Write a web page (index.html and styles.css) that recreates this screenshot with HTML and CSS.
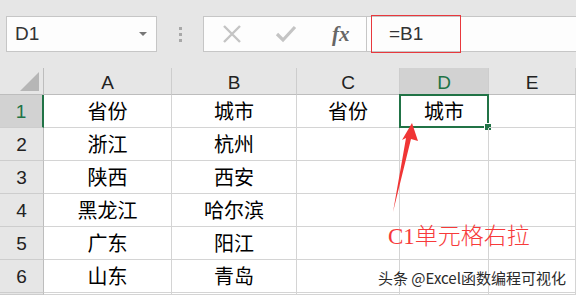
FILE: index.html
```html
<!DOCTYPE html>
<html lang="zh-CN">
<head>
    <meta charset="UTF-8">
    <title>Excel 公式右拉</title>
    <link rel="stylesheet" href="styles.css">
</head>
<body>

    <div class="toolbar">
        <div class="name-box">
            <span class="name-text">D1</span>
            <span class="drop"></span>
        </div>
        <div class="grip">
            <span></span><span></span><span></span>
        </div>
        <div class="fx-box">
            <svg class="ico" width="20" height="20" viewBox="0 0 20 20">
                <path d="M2 2 L18 18 M18 2 L2 18" stroke="#c4c4c4" stroke-width="2.4" fill="none"/>
            </svg>
            <svg class="ico" width="22" height="20" viewBox="0 0 22 20">
                <path d="M2 10 L8 16 L20 3" stroke="#c4c4c4" stroke-width="3.2" fill="none"/>
            </svg>
            <span class="fx">fx</span>
        </div>
        <div class="formula">
            <div class="formula-edit">=B1</div>
        </div>
    </div>

    <div class="sheet">
        <div class="corner"><span class="tri"></span></div>
        <div class="col-head">A</div>
        <div class="col-head">B</div>
        <div class="col-head">C</div>
        <div class="col-head active">D</div>
        <div class="col-head">E</div>

        <div class="row-head active">1</div>
        <div class="cell">省份</div>
        <div class="cell">城市</div>
        <div class="cell">省份</div>
        <div class="cell selected">城市<span class="handle"></span></div>
        <div class="cell"></div>

        <div class="row-head">2</div>
        <div class="cell">浙江</div>
        <div class="cell">杭州</div>
        <div class="cell"></div>
        <div class="cell"></div>
        <div class="cell"></div>

        <div class="row-head">3</div>
        <div class="cell">陕西</div>
        <div class="cell">西安</div>
        <div class="cell"></div>
        <div class="cell"></div>
        <div class="cell"></div>

        <div class="row-head">4</div>
        <div class="cell">黑龙江</div>
        <div class="cell">哈尔滨</div>
        <div class="cell"></div>
        <div class="cell"></div>
        <div class="cell"></div>

        <div class="row-head">5</div>
        <div class="cell">广东</div>
        <div class="cell">阳江</div>
        <div class="cell"></div>
        <div class="cell"></div>
        <div class="cell"></div>

        <div class="row-head">6</div>
        <div class="cell">山东</div>
        <div class="cell">青岛</div>
        <div class="cell"></div>
        <div class="cell"></div>
        <div class="cell"></div>

        <div class="row-head"></div>
        <div class="cell"></div>
        <div class="cell"></div>
        <div class="cell"></div>
        <div class="cell"></div>
        <div class="cell"></div>
    </div>

    <svg class="arrow" width="576" height="295" viewBox="0 0 576 295">
        <polygon points="412,123 418,141 411,139 393,212 406,138 402,140" fill="#f03535"/>
    </svg>
    <div class="note">C1单元格右拉</div>
    <div class="mark">头条 @Excel函数编程可视化</div>

</body>
</html>
```

FILE: styles.css
```css
body {
    margin: 0;
    width: 576px;
    height: 295px;
    overflow: hidden;
    background-color: #e6e6e6;
    font-family: "Liberation Sans", "Noto Sans CJK SC", sans-serif;
    position: relative;
}

.toolbar {
    height: 68px;
    display: flex;
    align-items: flex-start;
    padding-top: 16px;
    box-sizing: border-box;
}

.name-box {
    margin-left: 6px;
    width: 151px;
    height: 36px;
    box-sizing: border-box;
    border: 1px solid #c6c6c6;
    background-color: #fdfdfd;
    display: flex;
    align-items: center;
    justify-content: space-between;
    padding: 0 9px 0 8px;
}

.name-text {
    font-size: 19px;
    color: #333;
}

.drop {
    width: 0;
    height: 0;
    border-left: 4px solid transparent;
    border-right: 4px solid transparent;
    border-top: 4px solid #777;
}

.grip {
    width: 46px;
    height: 36px;
    display: flex;
    flex-direction: column;
    align-items: center;
    justify-content: center;
    gap: 3px;
}

.grip span {
    width: 3px;
    height: 3px;
    background-color: #a8a8a8;
}

.fx-box {
    width: 164px;
    height: 36px;
    box-sizing: border-box;
    border: 1px solid #c6c6c6;
    background-color: #fdfdfd;
    display: flex;
    align-items: center;
    padding-left: 18px;
    gap: 33px;
}

.fx {
    font-family: "Liberation Serif", serif;
    font-style: italic;
    font-weight: bold;
    font-size: 21px;
    color: #666;
    margin-left: 2px;
}

.formula {
    flex: 1;
    height: 36px;
    box-sizing: border-box;
    border-top: 1px solid #c6c6c6;
    border-bottom: 1px solid #c6c6c6;
    background-color: #fdfdfd;
    position: relative;
}

.formula-edit {
    position: absolute;
    left: 4px;
    top: -2px;
    width: 90px;
    height: 38px;
    box-sizing: border-box;
    border: 1px solid #e8383d;
    font-size: 19px;
    color: #333;
    padding-left: 17px;
    line-height: 36px;
}

.sheet {
    display: grid;
    grid-template-columns: 44px 128px 125px 103px 89px 1fr;
    grid-template-rows: 27px repeat(6, 33px) 2px;
    background-color: #fff;
    overflow: hidden;
}

.corner {
    background-color: #e6e6e6;
    border-right: 1px solid #bdbdbd;
    border-bottom: 1px solid #bdbdbd;
    position: relative;
}

.tri {
    position: absolute;
    right: 4px;
    bottom: 3px;
    width: 0;
    height: 0;
    border-left: 19px solid transparent;
    border-bottom: 19px solid #b6b6b6;
}

.col-head {
    background-color: #e6e6e6;
    border-right: 1px solid #cdcdcd;
    border-bottom: 1px solid #bdbdbd;
    font-size: 19px;
    color: #222;
    text-align: center;
    line-height: 30px;
}

.col-head.active {
    background-color: #d2d2d2;
    color: #217346;
}

.row-head {
    background-color: #e6e6e6;
    border-right: 1px solid #bdbdbd;
    border-bottom: 1px solid #cdcdcd;
    font-size: 19px;
    color: #222;
    text-align: center;
    line-height: 34px;
}

.row-head.active {
    background-color: #d2d2d2;
    color: #217346;
    border-right: 2px solid #217346;
}

.cell {
    border-right: 1px solid #d4d4d4;
    border-bottom: 1px solid #d4d4d4;
    font-family: "Noto Sans CJK SC", sans-serif;
    font-size: 20px;
    color: #000;
    text-align: center;
    line-height: 31px;
    position: relative;
}

.cell.selected {
    border: 2px solid #217346;
    margin: -1px 0 0 -1px;
    line-height: 29px;
}

.handle {
    position: absolute;
    right: -5px;
    bottom: -5px;
    width: 6px;
    height: 6px;
    background-color: #217346;
    border: 1px solid #fff;
}

.arrow {
    position: absolute;
    left: 0;
    top: 0;
}

.note {
    position: absolute;
    left: 388px;
    top: 217px;
    font-family: "Liberation Serif", "Noto Sans CJK SC", serif;
    font-size: 23px;
    color: #f73a3a;
    font-weight: 300;
}

.mark {
    position: absolute;
    left: 378px;
    top: 267px;
    font-family: "Noto Sans CJK SC", sans-serif;
    font-size: 15px;
    color: #2a2a2a;
    text-shadow: 0 0 2px #fff, 0 0 2px #fff;
}
```
